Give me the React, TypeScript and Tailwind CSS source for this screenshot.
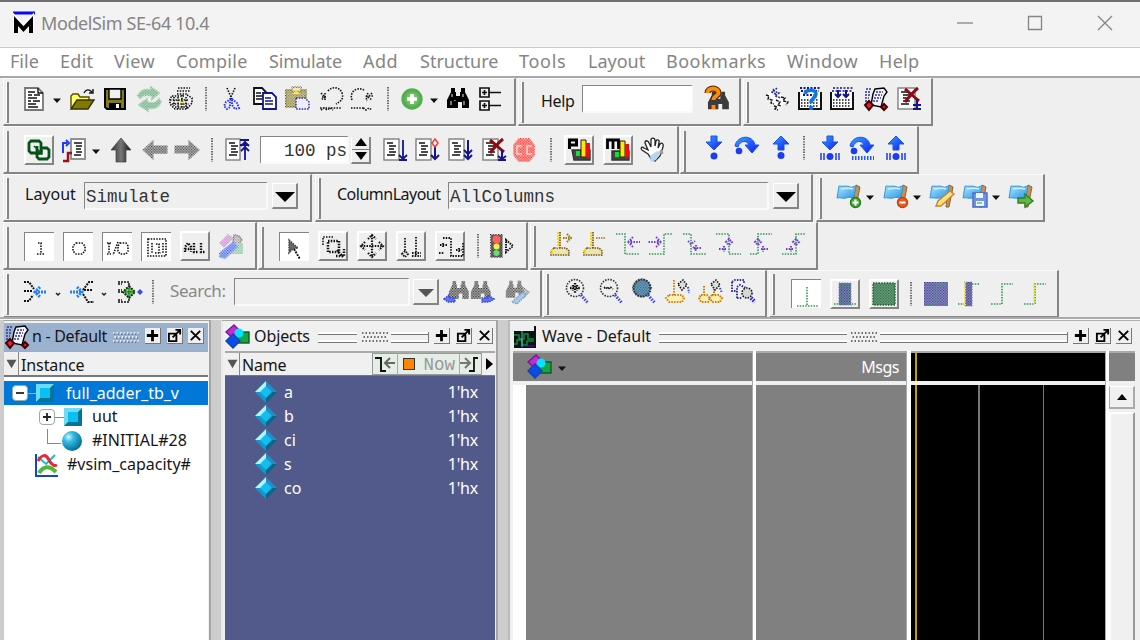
import React from "react";

type P = { c?: string; children?: React.ReactNode };

const NAVY = "#14148c";
const BLUE = "#1a5cf5";
const GREEN = "#2f9a55";
const PURPLE = "#6a3fd0";

function Svg({ c = "", children }: P) {
  return (
    <svg viewBox="0 0 24 24" className={`h-6 w-6 shrink-0 overflow-visible ${c}`} fill="none" stroke="#111" strokeWidth="1.4">
      {children}
    </svg>
  );
}

/* Disabled artwork is drawn with dotted strokes */
function Dot({ c = "", children }: P) {
  return (
    <Svg c={c}>
      <g strokeDasharray="1.5 1.25" strokeWidth="1.6">{children}</g>
    </Svg>
  );
}

function Patterns() {
  return (
    <svg className="absolute h-0 w-0">
      <defs>
        <pattern id="chk" width="2.7" height="2.7" patternUnits="userSpaceOnUse">
          <path d="M0 0h1.2v1.2H0zM1.350 1.350h1.2v1.2h-1.2z" fill="#fff" />
        </pattern>
        <mask id="dither" maskUnits="userSpaceOnUse" x="-4" y="-4" width="34" height="34">
          <rect x="-4" y="-4" width="34" height="34" fill="url(#chk)" />
        </mask>
        <linearGradient id="blueg" x1="0" y1="0" x2="1" y2="1">
          <stop offset="0" stopColor="#35a8ff" />
          <stop offset="1" stopColor="#1515f0" />
        </linearGradient>
        <linearGradient id="darkg" x1="0" y1="0" x2="1" y2="0">
          <stop offset="0" stopColor="#333" />
          <stop offset="0.5" stopColor="#777" />
          <stop offset="1" stopColor="#111" />
        </linearGradient>
        <radialGradient id="greeng">
          <stop offset="0" stopColor="#9bdc80" />
          <stop offset="1" stopColor="#48a544" />
        </radialGradient>
        <radialGradient id="ball" cx="0.33" cy="0.3" r="0.7">
          <stop offset="0" stopColor="#d4f6ff" />
          <stop offset="0.35" stopColor="#35bde4" />
          <stop offset="1" stopColor="#087196" />
        </radialGradient>
        <linearGradient id="flag" x1="0" y1="0" x2="1" y2="1">
          <stop offset="0" stopColor="#a9e5ff" />
          <stop offset="1" stopColor="#2796e6" />
        </linearGradient>
      </defs>
    </svg>
  );
}

function Bar({ c, children }: P) {
  return (
    <div className={`flex h-12 shrink-0 items-center border-t border-r-2 border-b-2 border-l border-t-[#fbfbfb] border-r-[#858585] border-b-[#858585] border-l-[#fbfbfb] bg-[#efefef] ${c}`}>
      <div className="mt-[3px] ml-[2px] h-[41px] w-[3px] shrink-0 self-start border-r-2 border-b border-[#858585] border-l border-l-white" />
      {children}
    </div>
  );
}

const Sep = ({ c = "" }: P) => <svg viewBox="0 0 2 24" className={`h-6 w-0.5 shrink-0 ${c}`}><path d="M1 0v24" stroke="#444" strokeWidth="1.5" strokeDasharray="1.400 1.200" /></svg>;

const Caret = ({ c = "" }: P) => (
  <svg viewBox="0 0 8 6" className={`mt-1 h-[6px] w-2 shrink-0 ${c}`}>
    <path d="M0 .5h8L4 5z" fill="#111" />
  </svg>
);

const SmallCaret = ({ c = "" }: P) => (
  <svg viewBox="0 0 8 6" className={`mt-1 h-[6px] w-2 shrink-0 ${c}`}>
    <path d="M2 2l2 2 2-2" fill="none" stroke="#222" strokeWidth="1.5" />
  </svg>
);

const Up = ({ c = "", children }: P) => (
  <div className={`flex h-[30px] w-[30px] shrink-0 items-center justify-center border-t-2 border-r-2 border-b-2 border-l-2 border-t-white border-r-[#858585] border-b-[#858585] border-l-white bg-[#efefef] ${c}`}>{children}</div>
);
const Down = ({ c = "", children }: P) => (
  <div className={`flex h-[29px] w-[30px] shrink-0 items-center justify-center border-t-[1.5px] border-l-[1.5px] border-[#858585] bg-white ${c}`}>{children}</div>
);
const Field = ({ c = "", children }: P) => (
  <div className={`flex h-[28px] shrink-0 items-center overflow-hidden border-t border-r-2 border-b-2 border-l border-t-[#858585] border-r-[#fafafa] border-b-[#fafafa] border-l-[#858585] pt-[5px] font-['Liberation_Mono',monospace] text-[17.5px] whitespace-pre text-[#333] ${c}`}>{children}</div>
);
const DropBtn = ({ c = "", dim = false }: { c?: string; dim?: boolean }) => (
  <div className={`flex h-[26px] w-[26px] shrink-0 items-center justify-center border-t border-r-2 border-b-2 border-l border-t-white border-r-[#858585] border-b-[#858585] border-l-white pt-1 ${c}`}>
    <svg viewBox="0 0 20 11" className="h-[11px] w-5 shrink-0">
      <path d={dim ? "M2 1h16L10 9z" : "M0 0h20L10 10z"} fill={dim ? "#555" : "#000"} />
    </svg>
  </div>
);

/* ---- shared drawings ---- */
const Sheet = ({ w = 15 }: { w?: number }) => (
  <>
    <rect x="1" y="1" width={w} height="21" fill="#fff" stroke="#808080" />
    <path d="M4 5h6M6 8h7M6 11h5M6 14h7M4 17h8" strokeWidth="1.6" />
  </>
);
const Binoc = () => (
  <path d="M5 1h4v4h1v4h4V5h1V1h4v4l4 8v8h-7v-6h-4v6H1v-8l4-8z" fill="#000" stroke="none" />
);
const Glints = () => <path d="M6 7v3M5 14v4M9 13v1M17 7v3M18 14v4" stroke="#eee" strokeWidth="1" />;
const Train = () => (
  <>
    <path d="M2 2h6M1 5h6M1 8h5M1 11h4M1 14h4" stroke="#33338c" strokeDasharray="2 1" />
    <path d="M11 2l9-1 3 4-3 4-3 11-10-2 2-11z" fill="#f2f4ff" stroke="#000" />
    <path d="M12 5h7M11 8h7M10 11h7M9 14h6" stroke="#35359a" strokeDasharray="2 1" />
    <path d="M5 14l4 4-4 5-4-5zM20 17l3 3-3 3-3-3z" fill="#e02030" stroke="#400" strokeWidth="2" />
  </>
);
const Shapes = () => (
  <>
    <path d="M9 0l7 7-7 7-8-7z" fill="#c42bd8" stroke="#7c1298" />
    <rect x="12" y="7" width="12" height="11" fill="#18a344" stroke="#075d20" />
    <circle cx="14" cy="8" r="4.5" fill="#00e5ff" stroke="none" />
    <path d="M8 9l7 7-7 7-7-7z" fill="#084de6" stroke="#1640ae" />
  </>
);
const Flag = () => (
  <>
    <path d="M19 1l4 2-4 20h-3l2-17z" fill="#c49154" stroke="#90642d" strokeWidth="1" />
    <path d="M2 2c4 1 8-1 11 1 3 1 3-1 6-1l-2 11c-3 2-5-1-8 1-3 1-6-1-9 0z" fill="url(#flag)" stroke="#3b95d0" strokeWidth="1" />
    <path d="M4 5c4 0 8-2 12 0" stroke="#c9f0ff" />
  </>
);
const BlueDown = () => <path d="M9 1h6v6h5l-8 8-8-8h5z" fill="url(#blueg)" stroke="#1555ee" strokeWidth="1" />;
const BlueUp = () => <path d="M12 0l8 8h-5v6H9V8H4z" fill="url(#blueg)" stroke="#1555ee" strokeWidth="1" />;
const BlueOver = () => (
  <>
    <path d="M0 10C2-1 18-2 20 9h4l-7 8-7-8h4c-2-5-9-5-11 2z" fill="url(#blueg)" stroke="#1555ee" strokeWidth="1" />
    <circle cx="4" cy="15" r="3.300" fill="#1a3cf5" stroke="none" />
  </>
);
const Tick = () => <path d="M3 17v7M6 17v7M18 17v7M21 17v7" stroke="#1a3cf5" strokeWidth="1.5" />;
const Globe = ({ y = 20.5 }: { y?: number }) => <circle cx="12" cy={y} r="3.5" fill="#1a3cf5" stroke="none" />;
const RedX = () => <path d="M8 2c5 4 9 8 14 12M21 1c-5 4-9 9-13 14" stroke="#8e0b16" strokeWidth="3" />;
const Edge = ({ d, a }: { d: string; a: string }) => (
  <>
    <path d={d} stroke={GREEN} />
    <path d={a} stroke={PURPLE} strokeWidth="2" />
  </>
);
const Lens = ({ children }: P) => (
  <>
    <circle cx="10" cy="9" r="8.5" stroke="#333" />
    <path d="M16 16l7 8" stroke="#3c3cf0" strokeWidth="3" />
    {children}
  </>
);

function RowOne() {
  return (
    <div className="flex h-12 items-start pl-[3px]">
      <Bar c="w-[513px] pb-[5px]">
        <Svg c="ml-[13px]">
          <path d="M3 1h13l5 5v17H3z" fill="#fff" stroke="#777" strokeWidth="1.8" />
          <path d="M16 1v5h5" />
          <path d="M6 5h7M6 8h4M12 8h6M6 11h9M6 14h3M11 14h7M6 17h8M6 20h10" strokeWidth="1.5" />
        </Svg>
        <Caret c="ml-[7px]" />
        <Svg c="ml-[9px]">
          <path d="M1 21V9l2-2h5l2 3h9v4" fill="#ffff68" stroke="#554d00" />
          <path d="M1 22l6-9h17l-6 9z" fill="#827a00" stroke="#333000" />
          <path d="M14 6c2-4 5-4 8-1M23 2v4h-4" />
        </Svg>
        <Svg c="ml-[9px]">
          <path d="M2 2h20v20H4l-2-2z" fill="#817b16" stroke="#000" strokeWidth="2" />
          <path d="M6 2h12v10H6z" fill="#f0f0f0" stroke="#000" />
          <path d="M6 16h12v6H6z" fill="#000" stroke="none" />
          <path d="M13 17h3v4h-3z" fill="#fff" stroke="none" />
        </Svg>
        <Svg c="ml-[10px]">
          <g fill="#65ad78" stroke="none" opacity=".35">
            <path d="M1 9c3-7 9-7 13-6V0l8 6-7 6V9C9 7 6 8 3 11z" />
            <path d="M24 15c-3 6-8 7-13 6v3l-9-6 8-6v3c6 2 9 1 12-3z" />
          </g>
          <g mask="url(#dither)" fill="#55a56c" stroke="#60ad75" strokeWidth="2">
            <path d="M1 9c3-7 9-7 13-6V0l8 6-7 6V9C9 7 6 8 3 11z" />
            <path d="M24 15c-3 6-8 7-13 6v3l-9-6 8-6v3c6 2 9 1 12-3z" />
          </g>
        </Svg>
        <Dot c="ml-[8px]">
          <path d="M9 1h12M8 4h13M8 7h10M3 9h12M18 8l5 3v5l-5 6H6l-5-5v-5l2-3M1 13h19M3 17h17M6 20h13M5 10v9M9 10v12M13 8v14M17 10v12" />
          <path d="M11 15h5" stroke="#f6e600" strokeWidth="2.500" />
        </Dot>
        <Sep c="ml-[12px]" />
        <Dot c="ml-[12px]">
          <path d="M8 1l5 11M16 1l-5 11" />
          <path d="M12 12l-5 3-2 4 3 3 3-2v-7M13 12l5 4 2 5-4 1-3-4z" stroke="#2434ff" strokeWidth="2" />
        </Dot>
        <Svg c="ml-[9px]">
          <path d="M2 1h8l4 4v12H2z" fill="#fff" strokeWidth="1.8" />
          <path d="M4 6h5M4 9h7M4 12h6" />
          <path d="M11 6h9l4 4v12H11z" fill="#fff" stroke={NAVY} strokeWidth="1.8" />
          <path d="M13 11h6M13 14h8M13 17h8" stroke={NAVY} />
        </Svg>
        <Svg c="ml-[9px]">
          <path d="M1 3h20v17H1z" fill="#c3bc78" stroke="none" opacity=".6" />
          <g mask="url(#dither)">
            <path d="M1 3h20v17H1z" fill="#7c7228" stroke="#443c00" strokeWidth="2" />
            <path d="M7 0h9v5H7z" fill="#ffe32d" stroke="#333" />
          </g>
          <path d="M7 7l4-3 5 3z" fill="#ffe95a" stroke="none" />
          <path d="M11 11h9l4 4v7H11z" fill="#eef" stroke="#29299a" strokeDasharray="1.5 1.25" />
        </Svg>
        <Dot c="ml-[10px]">
          <path d="M9 4c4-5 12-4 14 2s-1 8-6 11M2 6l4 4-4 3M6 6v7M3 10h4M1 21h22M2 23l3-2 3 2 3-2 3 2" />
        </Dot>
        <Dot c="ml-[7px]">
          <path d="M2 13C-1 6 6-1 14 3M22 6l-4 4 4 3M18 6l-2 4 1 4M16 9h7M1 21h14M13 21l3 2 3-2 3 2" />
        </Dot>
        <Sep c="ml-[13px]" />
        <Svg c="ml-[11px]">
          <circle cx="12" cy="12" r="10" fill="url(#greeng)" stroke="#58ad52" />
          <path d="M12 7v10M7 12h10" stroke="#fff" strokeWidth="3.5" />
        </Svg>
        <Caret c="ml-[6px]" />
        <Svg c="ml-[8px]"><Binoc /><Glints /></Svg>
        <Svg c="ml-[8px]">
          <path d="M2 1h9v9H2zM2 14h9v9H2zM11 5.500h12M11 18.500h12M6.500 3v5M4 5.500h5M6.500 16v5M4 18.500h5" strokeWidth="1.7" />
        </Svg>
      </Bar>
      <Bar c="ml-[2px] w-[223px] pb-[5px]">
        <span className="ml-[17px] w-[33px] pt-[3px] text-[16px] tracking-[-0.3px]">Help</span>
        <Field c="ml-[8px] w-[111px] bg-white" />
        <Svg c="ml-[12px]">
          <g transform="translate(2,4) scale(.95,.87)" opacity=".75"><Binoc /></g>
          <path d="M2.500 6c0-6 11-6 11 0 0 3-5 3-5 7M8.500 18v4" stroke="#4b2b00" strokeWidth="6" />
          <path d="M2.500 6c0-6 11-6 11 0 0 3-5 3-5 7M8.500 18v4" stroke="#ff8a0c" strokeWidth="4" />
        </Svg>
      </Bar>
      <Bar c="ml-[2px] w-[190px] pb-[5px]">
        <Svg c="ml-[16px]">
          <path d="M2 7l9-6 11 13-9 9z" fill="#fff" stroke="none" />
          <path d="M1 8l3 1-1 3 4 1-1 3 3 1M9 19l3 1-2 2 3 1M16 10l4 1-2 3 5 1-2 3M11 13l4 2-2 3 3 1" strokeDasharray="3 1" />
          <path d="M12 1l-3 3 5 2-4 3 6 2M9 2l-2 3 5 3" stroke="#33339c" strokeWidth="1.600" strokeDasharray="2 1" />
        </Svg>
        <Svg c="ml-[9px]">
          <path d="M1 5v17h22V5" fill="#fff" strokeWidth="2" />
          <path d="M2 1h20M3 4h18M5 8h14" stroke={NAVY} strokeDasharray="2 1.5" strokeWidth="2" />
          <path d="M3 13h18M3 16h18M3 19h18" strokeDasharray="1.5 1.5" />
          <path d="M7 7c1-5 11-5 11 0 0 4-5 4-5 9M13 19v4" stroke="#0879e7" strokeWidth="3.6" />
        </Svg>
        <Svg c="ml-[8px]">
          <path d="M1 5v17h22V5" fill="#fff" strokeWidth="2" />
          <path d="M3 1h20M2 4h20" stroke={NAVY} strokeDasharray="2 1.5" />
          <path d="M3 13h18M3 16h18M3 19h18" strokeDasharray="1.5 1.5" />
          <path d="M8 3v8M5 7l3 3 3-3M16 3v8M13 7l3 3 3-3" stroke={NAVY} strokeWidth="2" />
        </Svg>
        <Svg c="ml-[10px]"><Train /></Svg>
        <Svg c="ml-[9px]">
          <Sheet w={17} /><RedX />
          <path d="M20 12v9M16 18h8M16 22h8" stroke={NAVY} strokeWidth="2" />
        </Svg>
      </Bar>
    </div>
  );
}

function RowTwo() {
  return (
    <div className="flex h-12 items-start pl-[3px]">
      <Bar c="w-[676px] pt-px">
        <Up c="ml-[15px]">
          <Svg>
            <path d="M4 3h8l2 2v8l-2 2H4l-2-2V5z" stroke="#07521a" strokeWidth="2.800" />
            <path d="M10 8v11l2 2h8l2-2v-7l-2-2h-6" stroke="#07521a" strokeWidth="2.800" />
            <path d="M7 8l8 8M15 12v4h-4" stroke="#07521a" strokeWidth="1.500" />
          </Svg>
        </Up>
        <Svg c="ml-[8px]">
          <rect x="9" y="1" width="14" height="20" fill="#fff" stroke="#888" strokeWidth="1.800" />
          <path d="M12 5h8M14 8h6M14 11h5M14 14h6M12 17h7" strokeWidth="1.700" />
          <path d="M1 15V5h4M4 2l3 3-3 3" stroke="#1c3cff" strokeWidth="2" />
          <path d="M1 23h5v-8h4" stroke="#a20d1b" strokeWidth="2.500" />
        </Svg>
        <Caret c="ml-[6px]" />
        <Svg c="ml-[9px]"><path d="M12 0l10 12h-5v12H7V12H2z" fill="url(#darkg)" stroke="#444" strokeWidth=".7" /></Svg>
        <Svg c="ml-[10px]">
          <path d="M1 12L10 3v5h14v8H10v5z" fill="#ccc" stroke="none" />
          <path mask="url(#dither)" d="M0 12L10 3v5h14v7H10v6z" fill="#222" stroke="#333" />
        </Svg>
        <Svg c="ml-[8px]">
          <path d="M24 12L14 3v5H0v7h14v6z" fill="#ccc" stroke="none" />
          <path mask="url(#dither)" d="M24 12L14 3v5H0v7h14v6z" fill="#222" stroke="#333" />
        </Svg>
        <Sep c="ml-[12px]" />
        <Svg c="ml-[12px]">
          <Sheet w={14} />
          <path d="M15 2h9M15 7h9M20 22V3M16 8l4-4 4 4M16 13l4-4 4 4" stroke={NAVY} strokeWidth="1.800" />
        </Svg>
        <Field c="ml-[11px] w-[89px] justify-end bg-white">100 ps</Field>
        <div className="ml-[2px] flex h-[27px] w-5 shrink-0 flex-col border-r-2 border-b-2 border-l border-r-[#858585] border-b-[#858585] border-l-white">
          <div className="flex h-[13px] items-center justify-center border-b border-[#777]"><svg viewBox="0 0 12 9" className="h-[9px] w-3"><path d="M0 8h12L6 0z" /></svg></div>
          <div className="flex h-[12px] items-center justify-center"><svg viewBox="0 0 12 9" className="h-[9px] w-3"><path d="M0 1h12L6 9z" /></svg></div>
        </div>
        <Svg c="ml-[12px]"><Sheet /><path d="M20 2v19M16 17l4 4 4-4M16 22h8" stroke={NAVY} strokeWidth="1.800" /></Svg>
        <Svg c="ml-[8px]"><Sheet /><path d="M20 9v12M16 17l4 4 4-4" stroke={NAVY} strokeWidth="2" /><path d="M20 1l3 4-3 4-3-4z" fill="#fff" stroke="#ff3030" /></Svg>
        <Svg c="ml-[9px]"><Sheet /><path d="M20 2v19M16 12l4 4 4-4M16 17l4 4 4-4" stroke={NAVY} strokeWidth="2" /></Svg>
        <Svg c="ml-[10px]"><Sheet /><RedX /><path d="M20 12v9M16 18l4 3 4-3M16 22h8" stroke={NAVY} strokeWidth="2" /></Svg>
        <Svg c="ml-[6px]">
          <path d="M7 1h10l5 6v10l-5 6H7l-5-6V7z" fill="#ffb5ae" stroke="none" />
          <g mask="url(#dither)"><path d="M7 1h10l5 6v10l-5 6H7l-5-6V7z" fill="#ff1414" stroke="#ff1414" strokeWidth="2" /></g>
          <path d="M10 8H5v8h5M20 8h-5v8h5" stroke="#fff" opacity=".75" />
        </Svg>
        <Sep c="ml-[14px]" />
        <Up c="ml-[12px]">
          <Svg>
            <path d="M5 12h18v10H7z" fill="#444" stroke="#333" />
            <path d="M14 2h5v17h-5z" fill="#ffe900" stroke="#222" strokeWidth="1" /><path d="M19 5h4v14h-4z" fill="#f20c12" stroke="none" /><path d="M9 13h4v5H9z" fill="#00ee20" stroke="none" />
            <path d="M2.500 11V2h7v5h-7" stroke="#000" strokeWidth="3" />
          </Svg>
        </Up>
        <Up c="ml-[9px]">
          <Svg>
            <path d="M6 13h17v9H6z" fill="#444" stroke="#333" />
            <path d="M14 3h5v16h-5z" fill="#ffe900" stroke="#222" strokeWidth="1" /><path d="M19 6h4v13h-4z" fill="#f20c12" stroke="none" /><path d="M9 14h4v5H9z" fill="#00ee20" stroke="none" />
            <path d="M1.500 11V2h11v9M7 2v9" stroke="#000" strokeWidth="2.800" />
          </Svg>
        </Up>
        <Svg c="ml-[8px]">
          <path d="M7 16L1 12c-2-2 0-4 2-2l4 2L4 5c0-3 3-3 4 0l2 4V2c0-3 4-2 4 0v6l1-5c1-2 4-1 3 1l-1 6 2-4c2-2 4 0 3 3l-3 9-5 5-3-1z" fill="#fff" stroke="#222" strokeWidth="1.300" />
          <path d="M9 18l7-5 4 1-5 8-5 2z" fill="#b9d4ee" stroke="none" />
          <path d="M20 12l1 4" stroke="#999" strokeWidth="3" />
        </Svg>
      </Bar>
      <Bar c="ml-[1px] w-[239px] pt-px pb-[5px]">
        <Svg c="ml-[16px]"><g transform="translate(0,-1)"><BlueDown /></g><Globe y={20} /></Svg>
        <Svg c="ml-[9px]"><BlueOver /></Svg>
        <Svg c="ml-[10px]"><BlueUp /><Globe y={19.500} /></Svg>
        <Sep c="ml-[10px]" />
        <Svg c="ml-[13px]"><g transform="translate(0,-1)"><BlueDown /></g><Globe /><Tick /></Svg>
        <Svg c="ml-[8px]"><BlueOver /><path d="M2 22h22" stroke={BLUE} strokeWidth="4" strokeDasharray="1.500 1.500" /></Svg>
        <Svg c="ml-[10px]"><BlueUp /><Globe /><Tick /></Svg>
      </Bar>
    </div>
  );
}

function RowThree() {
  return (
    <div className="flex h-12 items-start pl-[3px]">
      <Bar c="w-[309px] pb-[3px]">
        <span className="ml-[16px] w-[51px] pb-1 text-[16px]">Layout</span>
        <Field c="ml-[8px] w-[184px] pl-px">Simulate</Field>
        <DropBtn c="ml-[4px]" />
      </Bar>
      <Bar c="ml-[3px] w-[498px] pb-[3px]">
        <span className="ml-[16px] w-[104px] pb-1 text-[16px] tracking-[-0.5px]">ColumnLayout</span>
        <Field c="ml-[7px] w-[321px] pl-px">AllColumns</Field>
        <DropBtn c="ml-[4px]" />
      </Bar>
      <Bar c="ml-[3px] w-[229px] pb-[3px]">
        <Svg c="ml-[15px]"><Flag /><circle cx="18.500" cy="18.500" r="5" fill="#4fae3c" stroke="#287a1e" /><path d="M18.500 15.500v6M15.500 18.500h6" stroke="#fff" strokeWidth="2" /></Svg>
        <Caret c="ml-[5px]" />
        <Svg c="ml-[10px]"><Flag /><circle cx="18.500" cy="18.500" r="5" fill="#f05a18" stroke="#c8400e" /><path d="M15.500 18.500h6" stroke="#fff" strokeWidth="2" /></Svg>
        <Caret c="ml-[5px]" />
        <Svg c="ml-[9px]"><Flag /><path d="M6 22l2-5L20 7l4 3-13 12z" fill="#ffe07a" stroke="#bd8740" /></Svg>
        <Svg c="ml-[9px]"><Flag /><path d="M10 9h14v14H10z" fill="#7292e5" stroke="#486bc3" /><path d="M13 9h7v5h-7zM13 17h8v5h-8z" fill="#e9f6ff" stroke="none" /><path d="M14 19h5" stroke="#62bd45" /></Svg>
        <Caret c="ml-[5px]" />
        <Svg c="ml-[9px]"><Flag /><path d="M9 14h7v-4l8 7-8 6v-4H9z" fill="#5fb947" stroke="#347e2a" /></Svg>
      </Bar>
    </div>
  );
}

function RowFour() {
  return (
    <div className="flex h-12 items-start pl-[3px]">
      <Bar c="w-[254px] pt-px">
        <Down c="ml-[15px]"><Dot><path d="M10 8h3v10M9 19h7" /></Dot></Down>
        <Down c="ml-[9px]"><Dot><path d="M9 8h6l3 3v5l-3 3H9l-3-3v-5z" /></Dot></Down>
        <Down c="ml-[9px]"><Dot><path d="M1 8h4M3 8v11M1 19h4M12 7L7 20M14 8h6l2 3v5l-2 3h-6l-2-3v-5z" /></Dot></Down>
        <Down c="ml-[9px]"><Dot><path d="M3 4h18v17H3zM11 9h3v9M10 18h6M7 8v10M18 8v10" /></Dot></Down>
        <Up c="ml-[9px]"><Dot><path d="M2 18v-5l3-4 3 4v5M2 15h6M11 9v9h4M18 9v9h4" strokeWidth="2.400" /></Dot></Up>
        <Svg c="ml-[9px]">
          <g opacity=".35" stroke="none"><path d="M1 9L9 1l5 3-9 9z" fill="#e0a0e0" /><path d="M12 9h12v11H12z" fill="#a6dcb8" /><path d="M1 19L14 7l5 4L6 24l-5-1z" fill="#6a90ff" /></g>
          <g mask="url(#dither)"><path d="M1 9L9 1l5 3-9 9z" fill="#cf75d5" stroke="#bd73c4" /><path d="M15 1l5 1 3 4-4 5-5-2z" fill="#777" /><path d="M12 9h12v11H12z" fill="#71b98b" stroke="none" /><path d="M1 19L14 9l4 4L6 24l-5-1z" fill="#1742f4" stroke="#304fee" strokeWidth="2" /></g>
        </Svg>
      </Bar>
      <Bar c="ml-[1px] w-[270px] pt-px">
        <Down c="ml-[15px]"><Svg><path d="M6 5l9 8-5 1-4 4z" fill="#666" stroke="#444" strokeWidth="1.500" strokeDasharray="1.500 1" /><path d="M11 14l6 10" strokeDasharray="2 1" strokeWidth="2" /></Svg></Down>
        <Up c="ml-[9px]"><Dot><path d="M2 11V3h10" /><path d="M7 7h11v11H7z" strokeWidth="2.600" /><path d="M16 16l6 7M15 22h8v-7" strokeWidth="2.500" /></Dot></Up>
        <Up c="ml-[9px]"><Dot><path d="M12 1v22M1 12h22M8 5l4-4 4 4M8 19l4 4 4-4M5 8l-4 4 4 4M19 8l4 4-4 4" strokeWidth="2.200" /></Dot></Up>
        <Up c="ml-[9px]"><Dot><path d="M6 4v13M3 20l3-3 3 3-3 3zM17 3v19M13 19h9M13 22h9" strokeWidth="1.800" /></Dot></Up>
        <Up c="ml-[9px]"><Dot><path d="M5 4h8v18h12V8M2 11h7M5 9v4M1 19h5M18 16h6M21 14v4" strokeWidth="1.800" /></Dot></Up>
        <Sep c="ml-[12px]" />
        <Svg c="ml-[11px]">
          <path d="M1 1h11v22H1z" fill="#888" stroke="none" /><path mask="url(#dither)" d="M1 1h11v22H1z" fill="#111" stroke="#111" strokeWidth="2" />
          <circle cx="6.500" cy="5.500" r="4" fill="#ff6258" stroke="none" /><circle cx="6.500" cy="12.500" r="3" fill="#f5ee55" stroke="none" /><circle cx="6.500" cy="19" r="3" fill="#67dd77" stroke="none" />
          <path d="M16 6l7 6-7 6z" strokeDasharray="1.500 1" strokeWidth="2" />
        </Svg>
      </Bar>
      <Bar c="ml-[2px] w-[288px] pb-[3px]">
        {["+", "-"].map((k) => (
          <Svg key={k} c={k === "+" ? "ml-[13px]" : "ml-[9px]"}>
            <path d="M9 0v16H5l-3 3v4h18v-4l-3-3h-5V0z" fill="#ecd458" opacity=".4" stroke="none" />
            <path d="M11 0v16M5 16h12l3 3v4H2v-4z" stroke="#6c5a13" strokeDasharray="1.500 1" strokeWidth="1.600" />
            <path d="M9 0v16M3 17v5" stroke="#ffd321" strokeDasharray="2 1" strokeWidth="2" />
            {k === "+" ? <path d="M14 6h8M18 2l4 4-4 4" stroke="#93771b" strokeWidth="2" strokeDasharray="1.500 1" /> : <path d="M14 6h9" stroke="#93771b" strokeDasharray="1.500 1" />}
          </Svg>
        ))}
        <Dot c="ml-[10px]"><Edge d="M0 2h9v20h15" a="M12 10l5-5M12 10l5 5M12 10h12M15 8v4" /></Dot>
        <Dot c="ml-[8px]"><Edge d="M1 22h15V2h8" a="M13 10L8 5M13 10l-5 5M13 10H0M10 8v4" /></Dot>
        <Dot c="ml-[11px]"><Edge d="M0 2h8v20h16" a="M5 9l3 3 4-3M10 15l3 3M11 16h7M13 13v6" /></Dot>
        <Dot c="ml-[9px]"><Edge d="M0 2h13v20h12" a="M10 10l3-3 3 3-3 3zM3 17h7M8 14v6" /></Dot>
        <Dot c="ml-[10px]"><Edge d="M0 22h8V2h14" a="M5 10l3-3 3 3-3 3zM11 17h7M13 14v6" /></Dot>
        <Dot c="ml-[8px]"><Edge d="M0 22h14V2h9" a="M11 10l3-3 3 3-3 3zM4 17h7M9 14v6" /></Dot>
      </Bar>
    </div>
  );
}

function RowFive() {
  return (
    <div className="flex h-12 items-start pl-[3px]">
      <Bar c="w-[539px] pb-[3px]">
        <Svg c="ml-[14px]"><path d="M1 2h5l5 7M1 11h9M1 21h5l4-6" strokeDasharray="2 1" strokeWidth="2" /><path d="M12 12h12M17 7l-5 5 5 5" stroke="#2581f2" strokeWidth="3" strokeDasharray="2 1" /></Svg>
        <SmallCaret c="ml-[7px]" />
        <Svg c="ml-[8px]"><path d="M23 2h-4l-6 8h10M13 14l5 8h6" strokeDasharray="2 1" strokeWidth="2" /><path d="M0 12h12M7 7l5 5-5 5" stroke="#2581f2" strokeWidth="3" strokeDasharray="2 1" /></Svg>
        <SmallCaret c="ml-[6px]" />
        <Svg c="ml-[9px]"><path d="M1 2h11v4M1 12h6M1 22h11v-3M1 4h4M1 10h4M1 20h4" strokeDasharray="2 1" /><path d="M12 6l6 6-6 6-6-6z" fill="#5fd058" stroke="#182a18" strokeWidth="2" strokeDasharray="2 1" /><path d="M12 8v8M8 12h8" stroke="#245427" strokeDasharray="1.500 1" /><path d="M21 12l2-2 2 2-2 2z" fill="#4654ff" stroke="#3b44e0" /></Svg>
        <Sep c="ml-[11px]" />
        <span className="ml-[16px] w-[56px] pb-1 text-[17px] tracking-[-0.4px] text-[#888]">Search:</span>
        <Field c="ml-[8px] w-[176px]" />
        <DropBtn c="ml-[3px]" dim />
        <Svg c="ml-[5px]"><g mask="url(#dither)" opacity=".9"><g transform="translate(4,0) scale(.9)"><Binoc /></g></g><g opacity=".18"><g transform="translate(4,0) scale(.9)"><Binoc /></g></g><path d="M0 19l5-4v3h6v4H4z" fill="#6175f4" stroke="#3541d8" strokeDasharray="1.500 1" /></Svg>
        <Svg c="ml-[2px]"><g mask="url(#dither)" opacity=".9"><g transform="translate(0,0) scale(.9)"><Binoc /></g></g><g opacity=".18"><g transform="scale(.9)"><Binoc /></g></g><path d="M24 19l-6-4v3h-6v4h7z" fill="#6175f4" stroke="#3541d8" strokeDasharray="1.500 1" /></Svg>
        <Svg c="ml-[11px]"><g opacity=".18"><g transform="scale(.85)"><Binoc /></g></g><g mask="url(#dither)" opacity=".8"><g transform="scale(.85)"><Binoc /></g><path d="M17 7l7 5-5 5z" fill="#555" /></g><path d="M7 22L18 12l3 3-9 9z" fill="#a7c9ea" stroke="#7ca1ca" strokeDasharray="1.500 1" /></Svg>
      </Bar>
      <Bar c="ml-[1px] w-[224px] pb-[5px]">
        <Dot c="ml-[16px]"><Lens><path d="M10 4v10M5 9h10M8 6v6M12 6v6" strokeWidth="2.300" /></Lens></Dot>
        <Dot c="ml-[10px]"><Lens><path d="M5 9l2-1 2 2 2-2 3 2" strokeWidth="2" /></Lens></Dot>
        <Dot c="ml-[9px]"><circle cx="10" cy="9" r="8.500" fill="#7ba6c4" stroke="#254a63" /><circle cx="10" cy="9" r="9" fill="#245878" mask="url(#dither)" /><Lens /></Dot>
        <Dot c="ml-[9px]"><path d="M9 1v15M4 16h13l2 3-2 4H4l-3-4z" stroke="#d08315" fill="#ffefb0" strokeWidth="2" /><path d="M13 5l5-4 4 5-5 5z" fill="#ddd" /><path d="M23 8l1 6" stroke="#3140e5" strokeWidth="2" /></Dot>
        <Dot c="ml-[9px]"><path d="M6 7v9M16 7v9M3 16h6l3 3-2 4H3l-2-4zM14 16h7l3 3-2 4h-8l-2-4z" stroke="#c97c00" fill="#ffefb0" strokeWidth="2" /><path d="M13 5l5-4 4 5-5 5z" fill="#ddd" /><path d="M22 9l2 5" stroke="#3140e5" strokeWidth="2" /></Dot>
        <Dot c="ml-[9px]"><path d="M1 3l3-2h9v4M1 3v9h5M6 19V8l3-2 6 3M6 19h5" stroke="#30309b" strokeWidth="2" /><circle cx="16" cy="14" r="5" fill="#d6d6d6" /><path d="M20 19l4 4" stroke="#2525d8" strokeWidth="4" /></Dot>
      </Bar>
      <Bar c="ml-[2px] w-[290px]">
        <Down c="ml-[16px]"><Dot><path d="M12 5v18M2 24h22" stroke={GREEN} /></Dot></Down>
        <Up c="ml-[9px]"><Dot><path d="M6 1h12v22H6z" fill="#9494c4" stroke="none" /><path d="M6 1h12v22H6z" fill="#22227c" mask="url(#dither)" stroke="#30309a" /><path d="M1 22h8V2h6v20h8" stroke={GREEN} /></Dot></Up>
        <Up c="ml-[9px]"><Dot><path d="M1 1h22v22H1z" fill="#79ad8b" stroke="#246c3b" /><path d="M1 1h22v22H1z" fill="#155529" mask="url(#dither)" stroke="none" /></Dot></Up>
        <Sep c="ml-[11px]" />
        <Dot c="ml-[12px]"><path d="M0 0h24v24H0z" fill="#9a9ac6" stroke="none" /><path d="M0 0h24v24H0z" fill="#292989" mask="url(#dither)" stroke="none" /><path d="M1 22h11V3h12" stroke="#499f79" /></Dot>
        <Dot c="ml-[9px]"><path d="M8 0h7v24H8z" fill="#9494c4" stroke="none" /><path d="M8 0h7v24H8z" fill="#22227c" mask="url(#dither)" stroke="#30309b" /><path d="M8 0v23" stroke="#f5e51b" strokeWidth="2" /><path d="M1 22h6M15 2h8" stroke={GREEN} /></Dot>
        <Dot c="ml-[9px]"><path d="M1 22h11V2h11" stroke={GREEN} /></Dot>
        <Dot c="ml-[9px]"><path d="M1 22h11V2h11" stroke={GREEN} /><path d="M11 2v20" stroke="#f5e51b" strokeWidth="2" /></Dot>
      </Bar>
    </div>
  );
}

const PanelButtons = ({ c = "" }: P) => (
  <div className={`mb-[2px] flex shrink-0 gap-[5.5px] ${c}`}>
    {["M8 2v12M2 8h12", "M2 6h8v8H2zM6 10l7-7M9 2h5v5", "M3 3l10 10M13 3L3 13"].map((d, i) => (
      <svg key={i} viewBox="0 0 16 16" className="h-4 w-4 border-r border-b border-[#777] bg-[#efefef]" fill="none" stroke="#000" strokeWidth={i === 0 ? 3 : 2}>
        <path d={d} />
      </svg>
    ))}
  </div>
);

const Dots = ({ c = "", light = false }: { c?: string; light?: boolean }) => (
  <svg viewBox="0 0 26 12" className={`h-3 w-[26px] shrink-0 ${c}`}>
    <path d="M0 2h26M1.500 6h24M0 10h26" stroke={light ? "#fff" : "#444"} strokeWidth="1.500" strokeDasharray="1.500 2" />
    {light && <path d="M1 3.200h25M3 7.200h22M1 11.200h25" stroke="#4d6176" strokeWidth="1.200" strokeDasharray="1.200 2.300" />}
  </svg>
);

const Rails = ({ c = "" }: P) => (
  <div className={`flex h-[11px] shrink-0 flex-col justify-between ${c}`}>
    <div className="h-[3px] border-b border-[#777] bg-white" />
    <div className="h-[3px] border-b border-[#777] bg-white" />
  </div>
);

const SortCell = () => (
  <div className="flex h-full w-[15px] items-center justify-center border-r border-[#888]">
    <svg viewBox="0 0 12 12" className="h-[10px] w-[11px]"><path d="M0 1h12L6 11z" fill="#555" /></svg>
  </div>
);

const Cube = ({ c = "" }: P) => (
  <svg viewBox="0 0 18 18" className={`h-[18px] w-[18px] shrink-0 ${c}`}>
    <path d="M0 0h18v18H0z" fill="#077496" /><path d="M0 18V0h18z" fill="#6ddcf5" /><path d="M4 4h10v10H4z" fill="#08c0f4" />
  </svg>
);

const Expander = ({ sign }: { sign: string }) => (
  <div className="flex h-4 w-4 shrink-0 items-center justify-center rounded-sm border border-[#9aa] bg-white">
    <svg viewBox="0 0 10 10" className="h-[10px] w-[10px]"><path d={sign === "+" ? "M5 1v8M1 5h8" : "M1 5h8"} stroke="#222" strokeWidth="1.800" /></svg>
  </div>
);

function InstancePanel() {
  return (
    <section className="flex w-[208px] flex-col border-t border-r-2 border-l border-[#a5a5a5] border-l-[#c8c8c8] bg-[#f0f0f0] pt-[2px] pr-px">
      <div className="flex h-[28px] shrink-0 items-center bg-[#9ab2d0]">
        <Svg c="ml-px"><Train /></Svg>
        <span className="ml-[3px] w-[78px] pb-[2px] text-[16px] tracking-[-0.3px]">n - Default</span>
        <Dots c="ml-[3px]" light />
        <PanelButtons c="ml-[6px]" />
      </div>
      <div className="flex h-[26px] shrink-0 items-center border-t border-b-2 border-t-[#aaa] border-b-[#777] bg-[#f0f0f0]">
        <SortCell /><span className="ml-[2px] pt-[2px] text-[16px] tracking-[-0.1px]">Instance</span>
      </div>
      <div className="min-h-0 flex-1 bg-white pt-[4px]">
        <div className="flex h-6 items-center bg-[#0078d7] pl-2 text-white">
          <Expander sign="-" /><div className="h-px w-2 bg-[#8bb]" /><Cube /><span className="ml-[12px] pb-px text-[16px]">full_adder_tb_v</span>
        </div>
        <div className="flex h-6 items-center pl-[35px]">
          <Expander sign="+" /><div className="h-px w-[9px] bg-[#888]" /><Cube /><span className="ml-[10px] pb-[2px] text-[16px]">uut</span>
        </div>
        <div className="flex h-6 items-center pl-[43px]">
          <div className="mb-[9px] h-[15px] w-[14px] border-b border-l border-[#888]" />
          <svg viewBox="0 0 20 20" className="ml-px h-5 w-5"><circle cx="10" cy="10" r="10" fill="url(#ball)" /></svg>
          <span className="ml-[10px] pb-[2px] text-[16px]">#INITIAL#28</span>
        </div>
        <div className="flex h-6 items-center pl-[30px]">
          <Svg><path d="M2 1v22h22" stroke="#1744c7" strokeWidth="2" /><path d="M4 4l8 7 9-9" stroke="#1bbaca" strokeWidth="2" /><path d="M4 8c4-7 8-7 11-1s6 6 8 5" stroke="#e62a32" strokeWidth="3" /><path d="M5 20c5-8 11-7 17-1" stroke="#4eb83d" strokeWidth="4" /></Svg>
          <span className="ml-[9px] pb-[2px] text-[16px]">#vsim_capacity#</span>
        </div>
      </div>
    </section>
  );
}

function ObjectsPanel() {
  return (
    <section className="ml-[10px] flex w-[277px] flex-col border-t border-r-2 border-l-2 border-[#a5a5a5] border-l-[#e8e8e8] bg-[#f0f0f0] pt-[2px] pr-px pl-[2px]">
      <div className="flex h-[28px] shrink-0 items-center">
        <Svg><Shapes /></Svg>
        <span className="ml-[5px] w-[62px] pb-[2px] text-[16px] tracking-[-0.1px]">Objects</span>
        <Rails c="ml-[2px] w-[39px]" /><Dots c="ml-[5px]" /><Rails c="ml-[3px] w-[38px] border-r border-[#777]" />
        <PanelButtons c="ml-[5px]" />
      </div>
      <div className="flex h-[25px] shrink-0 items-center border-t-2 border-b border-t-[#aaa] border-b-[#777]">
        <SortCell /><span className="ml-[2px] w-[130px] pt-[2px] text-[16px] tracking-[-0.2px]">Name</span>
        <div className="flex h-[22px] w-[110px] shrink-0 border border-[#999] bg-[#e4eee4]">
          <Svg c="-mt-[1px]"><path d="M2 5h6v13h3M22 10h-9M17 5l-5 5 5 5" stroke="#666" strokeWidth="2" /><path d="M2 5h6v13h5" strokeWidth="1.800" /></Svg>
          <div className="flex w-[63px] shrink-0 items-center justify-between border-r border-l border-[#aaa] pr-[4px] pl-[5px]">
            <div className="h-3 w-3 border-[1.5px] border-[#333] bg-[#ff8500]" />
            <span className="pt-[3px] font-['Liberation_Mono',monospace] text-[17.500px] text-[#999]">Now</span>
          </div>
          <Svg c="-mt-[1px] -ml-px"><path d="M1 10h9M6 5l5 5-5 5" stroke="#777" strokeWidth="2" /><path d="M10 18h5V5h4" strokeWidth="1.800" /></Svg>
        </div>
        <svg viewBox="0 0 7 12" className="ml-[4px] h-3 w-[7px] shrink-0"><path d="M0 0v12l7-6z" /></svg>
      </div>
      <div className="min-h-0 flex-1 bg-[#525a8c] pt-1 text-[16px] text-white">
        {["a", "b", "ci", "s", "co"].map((n) => (
          <div key={n} className="flex h-6 items-center pr-[17px] pl-[30px]">
            <svg viewBox="0 0 22 22" className="h-[22px] w-[22px]">
              <path d="M11 0L0 11h22z" fill="#238cc4" /><path d="M11 0v11H0z" fill="#b8f3ff" /><path d="M0 11l11 11V11z" fill="#1595c9" /><path d="M11 22l11-11H11z" fill="#07658b" /><path d="M11 5l6 6-6 6-6-6z" fill="#10bff0" />
            </svg>
            <span className="ml-[7px] flex-1">{n}</span><span className="tracking-[-0.2px]">1'hx</span>
          </div>
        ))}
      </div>
    </section>
  );
}

function WavePanel() {
  return (
    <section className="ml-[10px] flex min-w-0 flex-1 flex-col border-t border-l-2 border-[#b0b0b0] border-l-[#bbb] bg-[#f0f0f0] pt-[2px] pl-[3px]">
      <div className="flex h-[28px] shrink-0 items-center">
        <svg viewBox="0 0 22 22" className="ml-px h-[22px] w-[22px] shrink-0" fill="none">
          <path d="M0 0h22v22H0z" fill="#111" /><path d="M0 0h20v5H0z" fill="#eee" /><path d="M0 9h5v4h5V8h4v5h6M0 18h3v-4h5v5h5v-4h7" stroke="#11893c" strokeWidth="1.500" /><path d="M8 5v16" stroke="#1ed0df" strokeWidth="1" /><path d="M12 20h8" stroke="#2925d8" />
        </svg>
        <span className="ml-[6px] w-[114px] pb-[2px] text-[16px]">Wave - Default</span>
        <Rails c="ml-[3px] w-[188px]" /><Dots c="ml-[4px]" /><Rails c="ml-[3px] w-[188px] border-r border-[#777]" />
        <PanelButtons c="ml-[5px]" />
      </div>
      <div className="flex min-h-0 flex-1">
        <div className="flex w-[239px] flex-col border-t-2 border-[#aaa]">
          <div className="flex h-[28px] shrink-0 items-center bg-[#808080]"><Svg c="ml-[14px]"><Shapes /></Svg><Caret c="ml-[7px]" /></div>
          <div className="mt-[4px] min-h-0 flex-1 border-l-[13px] border-white bg-[#808080]" />
        </div>
        <div className="w-[4px] border-l border-[#aaa] bg-white" />
        <div className="flex w-[150px] flex-col border-t-2 border-[#aaa]">
          <div className="flex h-[28px] shrink-0 items-center justify-end bg-[#808080] pr-[7px] text-[16px] tracking-[-0.5px] text-white">Msgs</div>
          <div className="mt-[4px] min-h-0 flex-1 bg-[#808080]" />
        </div>
        <div className="w-[5px] border-l border-[#aaa] bg-white" />
        <div className="flex w-[194px] flex-col border-t-2 border-[#aaa]">
          <div className="h-[28px] shrink-0 bg-black pl-[4px]"><div className="h-full w-[2px] bg-[#c3a000]" /></div>
          <div className="mt-[4px] flex min-h-0 flex-1 bg-black pl-[4px]"><div className="w-[2px] bg-[#c3a000]" /><div className="ml-[61px] w-[1.500px] bg-[#777]" /><div className="ml-[63px] w-[1.500px] bg-[#777]" /></div>
        </div>
        <div className="w-[4px] border-l border-[#aaa] bg-white" />
        <div className="flex w-[26px] flex-col border-t-2 border-[#aaa]">
          <div className="h-[28px] shrink-0 bg-[#808080]" />
          <div className="mt-[5px] flex h-[23px] shrink-0 items-center justify-center border border-r-2 border-b-2 border-[#aaa] border-t-white"><svg viewBox="0 0 10 6" className="h-[6px] w-[10px]"><path d="M0 6h10L5 0z" /></svg></div>
          <div className="mt-[3px] min-h-0 flex-1 border-t-2 border-r-2 border-l-2 border-white border-r-[#999] bg-[#f0f0f0]" />
        </div>
        <div className="w-[3px]" />
      </div>
    </section>
  );
}

const menus: [string, string][] = [
  ["File", "w-[29px] tracking-[0px]"], ["Edit", "w-[33px] tracking-[0.3px]"], ["View", "w-[41px] tracking-[0.4px]"], ["Compile", "w-[72px] tracking-[0.3px]"],
  ["Simulate", "w-[73px] tracking-[-0.1px]"], ["Add", "w-[36px] tracking-[0.5px]"], ["Structure", "w-[78px] tracking-[0px]"], ["Tools", "w-[48px] tracking-[0.7px]"],
  ["Layout", "w-[57px] tracking-[0px]"], ["Bookmarks", "w-[100px] tracking-[0.5px]"], ["Window", "w-[71px] tracking-[0.5px]"], ["Help", "w-[40px] tracking-[0.3px]"],
];

export default function App() {
  return (
    <div className="flex h-[640px] w-[1140px] flex-col overflow-hidden bg-[#efefef] font-['Noto_Sans',sans-serif] leading-none whitespace-nowrap text-[#161616]">
      <Patterns />
      <header className="flex h-12 shrink-0 items-center border-t-2 border-b border-t-[#707070] border-b-[#cacaca] bg-[#f3f3f3] pb-[3px] pl-3">
        <svg viewBox="0 0 24 24" className="h-6 w-6" fill="none"><path d="M1 2h22" stroke="#0808f5" strokeWidth="3" /><path d="M4 22V9l7.500 8L19 9v13" stroke="#fff" strokeWidth="6" /><path d="M4 22V10l7.500 8L19 10v12" stroke="#000" strokeWidth="4" /></svg>
        <h1 className="ml-[5px] text-[18px] tracking-[-0.4px] text-[#858585]">ModelSim SE-64 10.4</h1>
        <div className="mr-[27px] ml-auto flex items-center gap-[54px]">
          {["M0 8h16", "M1.500 1.500h13v13h-13z", "M1 1l14 14M15 1L1 15"].map((d) => (
            <svg key={d} viewBox="0 0 16 16" className="h-4 w-4" fill="none" stroke="#858585" strokeWidth="1.300"><path d={d} /></svg>
          ))}
        </div>
      </header>
      <nav className="flex h-[30px] shrink-0 items-center gap-[21px] border-b-2 border-[#a8a8a8] bg-white pb-[2px] pl-[10px] text-[18px] text-[#858585]">
        {menus.map(([m, w]) => <span key={m} className={w}>{m}</span>)}
      </nav>
      <div className="-ml-0.5 flex h-[240px] shrink-0 flex-col border-l-2 border-[#d0d0d0]">
        <RowOne /><RowTwo /><RowThree /><RowFour /><RowFive />
      </div>
      <div className="-mt-px h-[3px] shrink-0 border-t-2 border-[#aaa] bg-[#f8f8f8]" />
      <main className="flex min-h-0 flex-1 bg-[#cdcdcd] pl-[3px]">
        <InstancePanel /><ObjectsPanel /><WavePanel />
      </main>
    </div>
  );
}
